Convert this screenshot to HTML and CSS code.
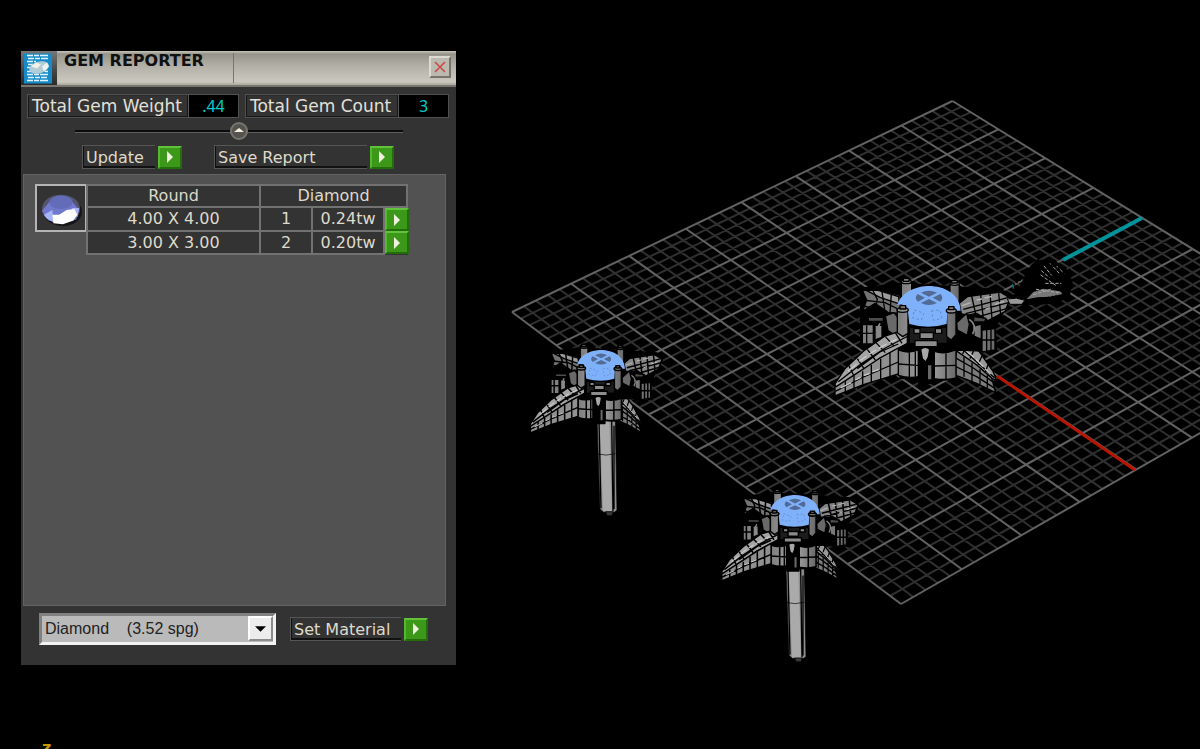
FILE: index.html
```html
<!DOCTYPE html>
<html lang="en">
<head>
<meta charset="utf-8">
<title>Gem Reporter</title>
<link rel="stylesheet" href="styles.css">
</head>
<body>
<svg class="scene" viewBox="0 0 1200 749" preserveAspectRatio="xMinYMin slice" role="img" aria-label="3D viewport">
  <defs>
    <linearGradient id="metal" x1="0" x2="1" y1="0" y2="0">
      <stop offset="0" stop-color="#7c7c7c"/><stop offset=".5" stop-color="#a9a9a9"/><stop offset="1" stop-color="#686868"/>
    </linearGradient>
    <g id="wing-right" stroke="#000" stroke-linejoin="round">
      <path fill="#999" d="M385 250 438 262 480 308 520 366 530 392 515 384 470 345 405 300 370 278Z"/>
      <path fill="#7b7b7b" d="M405 300 470 345 515 384 527 428 470 400 408 376Z"/>
      <path fill="none" d="M380 268 430 300 524 384M404 322 460 354 522 398M404 348 470 380 526 416M426 262 402 294M446 270 428 312M466 292 450 326M486 318 474 344M504 344 496 366M432 320V380M456 338V394M480 358V404M502 376V414"/>
      <path fill="none" stroke="#c6c6c6" stroke-width="4" d="M392 266 430 292 M436 300 462 322M468 328 490 350M495 356 512 372"/>
    </g>
    <g id="setting" stroke="#000" stroke-linejoin="round">
      <path fill="#000" d="M122 115 240 100 400 110 550 120 570 150 525 232 530 305 410 300 400 390 240 385 235 290 122 285Z"/>
      <path fill="#727272" d="M128 122 170 118 240 136 245 190 205 188 165 160 128 184 140 150Z"/>
      <path fill="#9b9b9b" d="M140 122 172 120 236 140 238 162 180 142Z"/>
      <path fill="none" d="M158 120 172 148 162 200M186 124 194 180M214 132 210 190M126 150 195 158 240 180M130 168 200 184"/>
      <path fill="#858585" d="M418 160 442 140 540 126 570 144 556 184 500 214 450 196 424 192Z"/>
      <path fill="none" d="M430 178 566 142M440 190 566 158M455 206 560 176M455 138 468 196M482 134 490 206M510 130 516 206M536 128 542 194"/>
      <path fill="none" stroke="#b5b5b5" stroke-width="4" d="M425 168 452 158M470 150 486 147M494 144 516 139M524 164 552 154M496 178 510 173"/>
      <path fill="#000" d="M440 196 470 190 520 222 515 236 460 232Z"/>
      <path fill="#696969" d="M196 198 222 188 236 205 234 262 204 242ZM410 218 440 190 448 222 442 256 412 240Z"/>
      <path fill="url(#metal)" d="M127 224H160V282H127ZM165 226H186V262L165 270ZM462 228 484 222V268L462 258ZM486 240 525 236V300L486 306Z"/>
      <path fill="none" d="M140 226V282M127 250H160M500 240V304M513 238V303M486 270H525"/>
      <path fill="#4d4d4d" d="M145 202H190V214H145ZM462 200 498 205 494 216H460Z"/>
      <path fill="none" stroke="#898989" stroke-width="5" d="M180 220Q168 238 182 258M448 208Q472 225 458 252"/>
      <path fill="url(#metal)" d="M244 98H275V142H244ZM390 104H418V154H390Z"/>
      <ellipse cx="259" cy="95" rx="15" ry="6" fill="#888"/><ellipse cx="404" cy="100" rx="14" ry="6" fill="#888"/>
      <path fill="#777" d="M250 85H267V94H250ZM395 91H412V99H395Z"/>
      <path fill="#1c1c1c" d="M268 232H382V280H268Z"/>
      <path fill="#8c8c8c" d="M282 236H300V250H282ZM300 248H340V266H300ZM346 236H365V250H346ZM285 272H352V290H285Z"/>
      <path fill="url(#metal)" d="M235 300Q264 312 295 300V380Q266 386 235 376ZM343 304Q372 314 408 300V384Q377 392 343 386Z"/>
      <path fill="none" d="M235 342 295 346M268 307V382M343 348 408 346M378 310V388M286 304V380"/>
      <path fill="#000" d="M296 292H342V400H296Z"/>
      <path fill="#a7a7a7" d="M302 298Q316 286 329 298L325 322 317 336 307 326Z"/>
      <path fill="#686868" d="M322 344H336V390H322Z"/>
      <path fill="#a4a4a4" d="M262 238 246 242 195 258 130 304 75 356 45 402 48 416 110 378 180 324 262 280Z"/>
      <path fill="#909090" d="M45 412 110 370 180 324 235 294V372L130 404 45 438Z"/>
      <path fill="none" d="M55 395 126 340 196 294 264 258M46 424 124 384 235 336M112 356 180 306 235 282M86 346 102 378M112 326 132 356M142 298 166 330M168 278 196 308M196 260 222 288M226 248 246 280M76 394V426M102 378V414M128 364V406M154 344V398M182 326V388M210 306V380"/>
      <path fill="none" stroke="#cbcbcb" stroke-width="4" d="M62 414 94 398M106 390 122 382M132 376 150 370M158 365 178 358M84 364 110 342M118 334 140 318M148 312 168 300M176 295 200 282M208 278 230 268"/>
      <path fill="url(#metal)" d="M232 178H264V250L248 260 232 248ZM380 180H408V254L394 270 380 260Z"/>
      <path fill="#7fb1fa" stroke="none" d="M232 166C242 124 294 108 326 108C374 108 420 132 422 182H408C405 167 384 168 382 185L380 222Q325 238 268 222L264 185C262 164 242 160 232 166Z"/>
      <path fill="#526b95" stroke="none" d="M303 128Q326 116 351 128L327 140ZM293 132 315 143 294 155Q281 144 293 132ZM361 132Q373 143 361 155L338 143ZM303 159 327 147 351 159Q326 171 303 159Z"/>
      <path fill="none" stroke="#5f88c6" stroke-width="3" stroke-dasharray="7 8" d="M283 180 312 190 304 210 278 204ZM334 183 360 180 366 205 340 211Z"/>
      <ellipse cx="248" cy="180" rx="17" ry="7" fill="#929292"/><ellipse cx="394" cy="182" rx="15" ry="7" fill="#929292"/>
      <path fill="#777" d="M240 167H257V177H240ZM386 170H402V179H386Z"/>
    </g>
    <g id="post" stroke="#000" stroke-width="2">
      <path fill="#8e8e8e" d="M0 0H55L60 274 52 280H20L9 270Z"/>
      <path fill="#aaa" stroke="none" d="M8 2H37L45 276H18Z"/>
      <path fill="none" d="M1 105Q28 112 55 104"/>
      <path fill="none" stroke-width="4" d="M6 5 12 268M44 0 48 276M51 20V270"/>
      <path fill="#393939" d="M26 278H49L45 290H30Z"/>
    </g>
  </defs>
  <g fill="none">
    <path id="grid-minor" class="grid-minor"/>
    <path id="grid-major" class="grid-major"/>
  </g>
  <path d="M1063 260 1142 218" stroke="#00939b" stroke-width="4"/>
  <path d="M997 376 1135 470" stroke="#b81400" stroke-width="3"/>
  <g transform="translate(820 250) scale(.3333)">
    <path d="M590 130 625 55 650 30 680 30 705 30 745 65 758 95 750 135 715 160 650 165 600 165 560 145Z"/>
    <path fill="#777" d="M620 148 640 126 670 116 720 124 728 132 690 140 652 142Z"/>
    <path fill="none" stroke="#aaa" stroke-width="3" stroke-dasharray="10 5" d="M672 48 695 76M690 40 720 72M710 48 732 70M664 62 688 82M648 118 716 128M640 134 698 116M676 100H724M662 75 710 108"/>
    <path fill="none" stroke="#000" stroke-width="7" stroke-dasharray="5 6" d="M652 28 705 48 748 60 754 120 700 155M580 105 628 65M640 150 740 135"/>
    <path fill="none" stroke="#00777c" stroke-width="4" d="M577 102 581 116M540 121H550"/>
    <g stroke-width="4"><use href="#wing-right"/><use href="#setting"/></g>
    <path fill="#999" stroke="#000" stroke-width="3" d="M562 147Q590 140 615 151L605 163H570Z"/>
  </g>
  <g transform="translate(597 419) scale(.3333)"><use href="#post"/></g>
  <g transform="translate(786 569) scale(.3333 .32)"><use href="#post"/></g>
  <g transform="translate(519 323) scale(.251)" stroke-width="6">
    <g transform="translate(80 38) scale(.77 .93)"><use href="#wing-right"/></g><use href="#setting"/>
  </g>
  <g transform="translate(710 467) scale(.26)" stroke-width="6">
    <g transform="translate(75 38) scale(.79 .92)"><use href="#wing-right"/></g><use href="#setting"/>
  </g>
  <text class="axis-name" x="42" y="753">z</text>
</svg>

<main class="window">
  <header class="titlebar">
    <span class="logo">
      <svg viewBox="0 0 28 30" aria-hidden="true">
        <rect width="28" height="30" fill="#168bc8"/>
        <path stroke="#e3f5fc" stroke-width="1.5" stroke-dasharray="6 1 5 1 9 1" d="M3 2H24M4 5H24M3 8H12M4 11H9M3 21H24M4 24H23M3 27H24"/>
        <path stroke="#e3f5fc" stroke-width="1.5" d="M3 14H6M3 18H8M21 18H24"/>
        <ellipse cx="15" cy="14" rx="10" ry="6" fill="#b3cdd6" transform="rotate(-15 15 14)"/>
        <path fill="#f1f2ea" d="M7 13 12 9 17 11 13 15ZM18 13 23 9 25 13 20 18Z"/>
      </svg>
    </span>
    <h1 class="title">GEM REPORTER</h1>
    <span class="title-rest">
      <button class="close" aria-label="Close"><svg viewBox="0 0 12 12"><path d="M1 1 11 11M11 1 1 11" stroke="#cb4a48" stroke-width="1.6"/></svg></button>
    </span>
  </header>

  <section class="totals">
    <div class="total"><span class="total-name">Total Gem Weight</span><output class="total-value">.44</output></div>
    <div class="total total-count"><span class="total-name">Total Gem Count</span><output class="total-value">3</output></div>
  </section>

  <div class="divider">
    <button class="knob" aria-label="Collapse"><svg viewBox="0 0 18 18"><circle cx="9" cy="9" r="8" fill="#55534f" stroke="#77756f" stroke-width="2"/><path d="M4 10 9 6 14 10Z" fill="#f2eee0"/></svg></button>
  </div>

  <section class="actions">
    <div class="action"><label class="caption caption-update" for="update">Update</label><button class="go" id="update"><svg viewBox="0 0 6 12"><path d="M0 0 6 6 0 12Z"/></svg></button></div>
    <div class="action"><label class="caption caption-save" for="save">Save Report</label><button class="go" id="save"><svg viewBox="0 0 6 12"><path d="M0 0 6 6 0 12Z"/></svg></button></div>
  </section>

  <section class="list">
    <div class="gem">
      <svg viewBox="0 0 48 44" role="img" aria-label="Round gem">
        <ellipse cx="26" cy="26" rx="20" ry="15" fill="#161616"/>
        <ellipse cx="24" cy="23" rx="20" ry="15" fill="#55556f"/>
        <path fill="#7179cc" d="M4 25 14 13 34 13 43 24 40 34 26 38 11 35Z"/>
        <ellipse cx="24" cy="16" rx="12" ry="7" fill="#636cb9"/>
        <path fill="#a8b4f5" d="M6 29 15 24 16 37 9 33ZM35 22 43 22 41 32Z"/>
        <path fill="#fff" d="M15 29 22 29 30 24 38 23 41 29 37 35 26 39 16 38Z"/>
      </svg>
    </div>
    <table class="gems">
      <colgroup><col class="col-size"><col class="col-count"><col class="col-weight"><col class="col-go"></colgroup>
      <thead><tr><th>Round</th><th colspan="3">Diamond</th></tr></thead>
      <tbody>
        <tr><td>4.00 X 4.00</td><td>1</td><td>0.24tw</td><td class="cell-go"><button class="go" aria-label="Select 4.00 X 4.00"><svg viewBox="0 0 6 12"><path d="M0 0 6 6 0 12Z"/></svg></button></td></tr>
        <tr><td>3.00 X 3.00</td><td>2</td><td>0.20tw</td><td class="cell-go"><button class="go" aria-label="Select 3.00 X 3.00"><svg viewBox="0 0 6 12"><path d="M0 0 6 6 0 12Z"/></svg></button></td></tr>
      </tbody>
    </table>
  </section>

  <footer class="material">
    <div class="select-box">
      <select class="select" aria-label="Material"><option>Diamond&nbsp;&nbsp;&nbsp;&nbsp;(3.52 spg)</option></select>
      <span class="select-arrow"><svg viewBox="0 0 10 5"><path d="M0 0H10L5 5Z"/></svg></span>
    </div>
    <div class="action"><label class="caption caption-material" for="set">Set Material</label><button class="go" id="set"><svg viewBox="0 0 6 12"><path d="M0 0 6 6 0 12Z"/></svg></button></div>
  </footer>
</main>
<script src="grid.js"></script>
</body>
</html>
```
FILE: styles.css
```css
* { box-sizing: border-box; }

body {
  margin: 0;
  min-height: 100vh;
  overflow: hidden;
  background: #000;
  color: #dedacb;
  font: 16px/20px "DejaVu Sans", Verdana, sans-serif;
}

button { padding: 0; font: inherit; }
svg { display: block; }

.scene { position: absolute; top: 0; left: 0; width: 100%; height: 100vh; }
.grid-minor { stroke: #303030; stroke-width: 2; }
.grid-major { stroke: #626262; stroke-width: 2; }
.axis-name { fill: #c99a00; font: bold 16px "DejaVu Sans", sans-serif; }

.window {
  position: relative;
  width: 435px;
  margin: 51px 0 0 21px;
  padding-bottom: 20px;
  background: #333;
}

.titlebar {
  display: flex;
  height: 36px;
  border-bottom: 2px solid #77766f;
  background: linear-gradient(#c8c5bb 0, #96938a 3px, #b0ada5 40%, #cbc8bf 90%, #aaa79e);
}
.logo { width: 36px; padding: 2px 5px 2px 3px; background: linear-gradient(#777, #444 60%, #2b2b2b); }
.logo svg { width: 28px; height: 31px; }
.title {
  width: 177px;
  margin: 2px 0;
  padding-left: 7px;
  border-right: 1px solid #77746c;
  color: #111;
  font-size: 16px;
  line-height: 16px;
  font-weight: bold;
}
.title-rest { display: flex; flex: 1; justify-content: flex-end; padding: 5px 5px 0 0; }
.close {
  display: grid;
  place-items: center;
  width: 22px;
  height: 22px;
  border: 2px solid;
  border-color: #dddad2 #77746e #77746e #dddad2;
  background: #bcb9b1;
}
.close svg { width: 12px; height: 12px; }

.totals { display: flex; gap: 6px; padding: 7px 7px 0 6px; }
.total { display: flex; flex: 212 1 0; height: 24px; border: 1px solid #505050; }
.total-count { flex-grow: 204; }
.total-name {
  flex: 1;
  padding-left: 3px;
  border: 1px solid #171717;
  border-top-color: #2a2a2a;
  font-size: 17px;
  line-height: 20px;
  white-space: nowrap;
  color: #e2e0da;
}
.total-value {
  width: 50px;
  border-left: 1px solid #555;
  background: #000;
  color: #00cfd0;
  font: 16px/23px "Noto Sans", sans-serif;
  text-align: center;
}

.divider {
  display: flex;
  justify-content: center;
  margin: 4px 53px 0 54px;
  background: linear-gradient(transparent 8px, #0b0b0b 8px, #0b0b0b 10px, #606060 10px, #606060 11px, transparent 11px);
}
.knob { border: 0; background: none; }
.knob svg { width: 18px; height: 18px; }

.actions { display: flex; gap: 32px; padding: 5px 61px 0; }
.action { display: flex; gap: 3px; align-items: center; }
.caption {
  height: 24px;
  padding-left: 3px;
  border: 1px solid #555;
  border-right: 0;
  box-shadow: inset 1px -2px #111;
  line-height: 23px;
  white-space: nowrap;
}
.caption-update { width: 73px; }
.caption-save { width: 153px; }
.caption-material { width: 111px; }
.go {
  display: grid;
  place-items: center;
  width: 24px;
  height: 23px;
  border: 2px solid;
  border-color: #62c23b #236d0c #236d0c #55b92e;
  background: #3b9819;
  fill: #f1efdf;
}
.go svg { width: 6px; height: 12px; }

.list {
  display: flex;
  align-items: flex-start;
  min-height: 432px;
  margin: 5px 10px 0 2px;
  padding: 9px 0 0 11px;
  border: 1px solid #636363;
  background: #525252;
}
.gem { width: 52px; height: 48px; padding: 1px; border: 2px solid #b5b5b5; background: #333; }
.gem svg { width: 46px; height: 42px; }
.gems { width: 320px; margin-left: -1px; border-collapse: collapse; table-layout: fixed; background: #333; }
.gems th, .gems td {
  height: 23px;
  padding: 0;
  border: 2px solid #727272;
  font-weight: normal;
  line-height: 20px;
  text-align: center;
}
.gems th { height: 22px; line-height: 18px; }
.col-size { width: 173px; }
.col-count { width: 52px; }
.col-weight { width: 72px; }
.col-go { width: 23px; }
.gems .cell-go { border: 0; }

.material { display: flex; gap: 14px; align-items: center; padding: 7px 28px 0 18px; }
.select-box { position: relative; flex: 1; }
.select {
  width: 100%;
  height: 32px;
  padding: 0 0 0 3px;
  border: 3px solid;
  border-color: #808080 #f3f3f3 #f3f3f3 #808080;
  border-radius: 0;
  appearance: none;
  background: #bababa;
  color: #222;
  font: 16px/24px "Liberation Sans", Arial, sans-serif;
}
.select-arrow {
  position: absolute;
  top: 3px;
  right: 3px;
  display: grid;
  place-items: center;
  width: 25px;
  height: 25px;
  border: 2px solid;
  border-color: #fff #8c8c8c #8c8c8c #fff;
  background: #ededed;
  pointer-events: none;
}
.select-arrow svg { width: 11px; height: 6px; }
```
FILE: grid.js
```js
// Ground plane: 8 x 8 major cells, each split into minor cells, in perspective.
const MAJOR = 8;
const SPLIT = 5;

function project(u, v) {
  const w = 1 + 0.086 * u - 0.098 * v;
  return [
    (522.4 * u + 300.7 * v + 512) / w,
    (-202.3 * u + 232.8 * v + 312) / w,
  ].map((n) => n.toFixed(1)).join(" ");
}

let minor = "";
let major = "";
const steps = MAJOR * SPLIT;
for (let i = 0; i <= steps; i++) {
  const t = i / steps;
  const lines = `M${project(t, 0)}L${project(t, 1)}M${project(0, t)}L${project(1, t)}`;
  if (i % SPLIT === 0) major += lines;
  else minor += lines;
}
document.getElementById("grid-minor").setAttribute("d", minor);
document.getElementById("grid-major").setAttribute("d", major);
```
